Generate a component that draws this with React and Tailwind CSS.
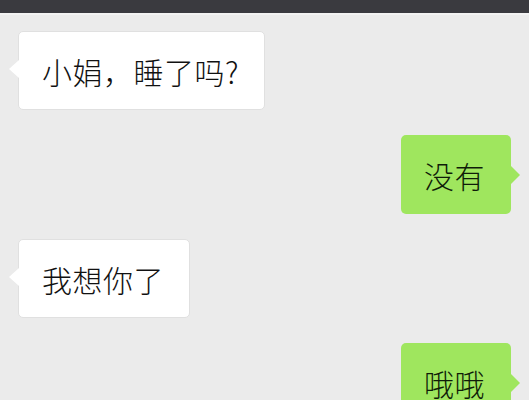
const mensagens = [
  { id: 1, lado: 'esquerda', texto: '小娟，睡了吗?' },
  { id: 2, lado: 'direita', texto: '没有' },
  { id: 3, lado: 'esquerda', texto: '我想你了' },
  { id: 4, lado: 'direita', texto: '哦哦' },
]

function Balao({ lado, texto }) {
  const direita = lado === 'direita'

  return (
    <div className={`flex ${direita ? 'justify-end' : 'justify-start'}`}>
      <div
        className={`relative flex h-[79px] items-center rounded-[5px] px-[23px] text-[30px] leading-[30px] font-light tracking-[0.5px] ${
          direita
            ? 'bg-[#9fe65e] pr-[26px] text-[#0f1c08]'
            : 'border border-[#e0e0e0] bg-white pr-[25px] text-[#111111]'
        }`}
      >
        {texto}
        {direita ? (
          <span className="absolute top-[31px] right-[-9px] h-0 w-0 border-y-[9px] border-l-[9px] border-y-transparent border-l-[#9fe65e]" />
        ) : (
          <span className="absolute top-[28px] left-[-10px] h-0 w-0 border-y-[9px] border-r-[10px] border-y-transparent border-r-white" />
        )}
      </div>
    </div>
  )
}

export default function App() {
  return (
    <div className="h-[400px] w-[529px] overflow-hidden bg-[#ebebeb] font-['Noto_Sans_CJK_SC','Noto_Sans',sans-serif]">
      <div className="h-[15px] border-b-2 border-[#f2f2f2] bg-[#3a3a3f]" />
      <div className="flex flex-col gap-[25px] pt-[16px] pr-[18px] pl-[18px]">
        {mensagens.map((mensagem) => (
          <Balao key={mensagem.id} lado={mensagem.lado} texto={mensagem.texto} />
        ))}
      </div>
    </div>
  )
}
